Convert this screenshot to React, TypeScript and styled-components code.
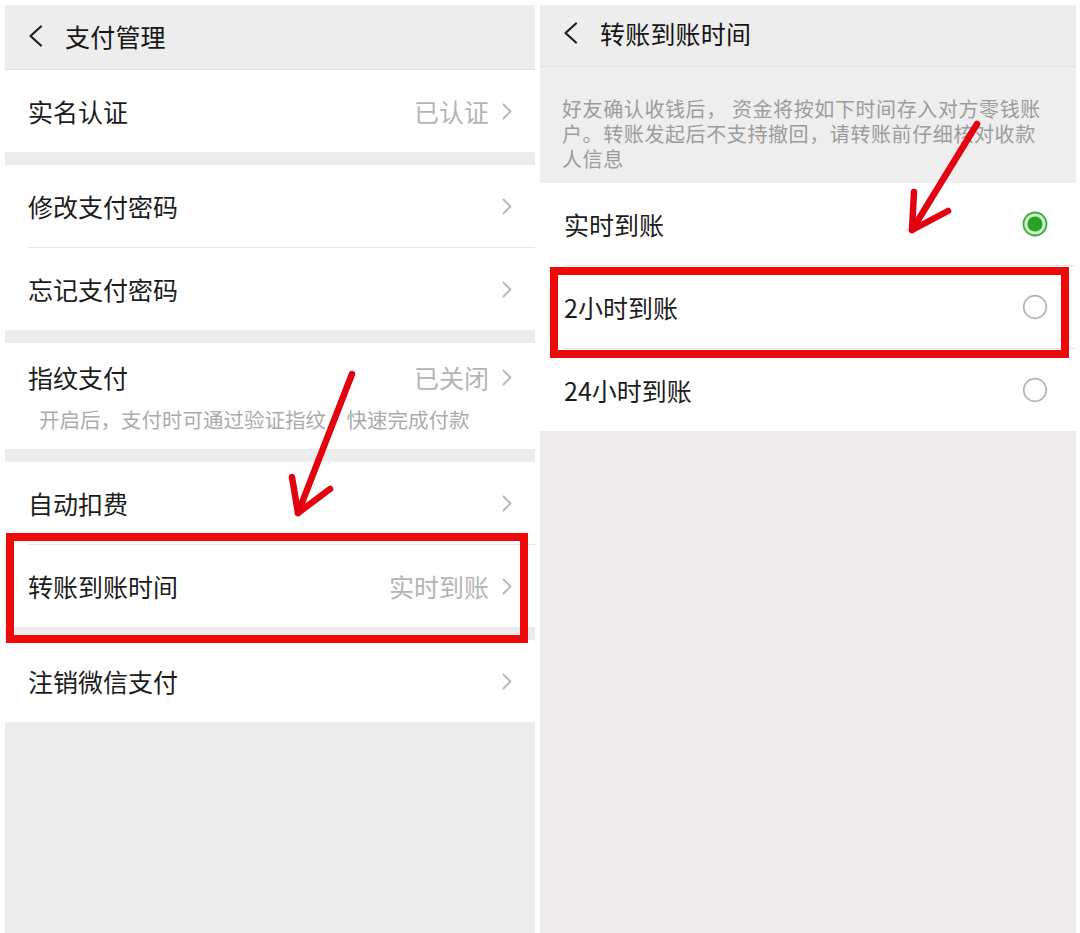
import React from "react";
import styled, { createGlobalStyle } from "styled-components";

const Global = createGlobalStyle`
  html, body { margin: 0; padding: 0; background: #ffffff; }
  body { font-family: "Noto Sans CJK SC", "Noto Sans", sans-serif; overflow: hidden; }
  * { box-sizing: border-box; }
`;

const Stage = styled.div`
  display: flex;
  gap: 5px;
  padding: 5px 4px 0 5px;
  height: 933px;
  overflow: hidden;
  background: #ffffff;
`;

const Panel = styled.div<{ $w: number; $bg: string }>`
  position: relative;
  width: ${(p) => p.$w}px;
  flex: 0 0 ${(p) => p.$w}px;
  height: 100%;
  background: ${(p) => p.$bg};
  display: flex;
  flex-direction: column;
  overflow: hidden;
`;

const Header = styled.div<{ $h: number; $pb?: number }>`
  height: ${(p) => p.$h}px;
  flex: 0 0 ${(p) => p.$h}px;
  background: #ededed;
  border-bottom: 1px solid #e0e0e0;
  display: flex;
  align-items: center;
  gap: 22px;
  padding: 0 0 ${(p) => p.$pb ?? 0}px 23px;
`;

const HeaderTitle = styled.div`
  font-size: 25px;
  color: #151515;
  line-height: 1;
  letter-spacing: 0.2px;
`;

const Group = styled.div<{ $mt?: number }>`
  background: #ffffff;
  margin-top: ${(p) => p.$mt ?? 0}px;
  display: flex;
  flex-direction: column;
`;

const Divider = styled.div<{ $inset: number }>`
  height: 1px;
  margin-left: ${(p) => p.$inset}px;
  background: #e6e6e6;
`;

const Row = styled.div<{ $h?: number }>`
  height: ${(p) => p.$h ?? 82}px;
  display: flex;
  align-items: center;
  padding: 0 23px 0 23px;
`;

const Label = styled.div`
  flex: 1;
  font-size: 25px;
  color: #1c1c1c;
  line-height: 1.4;
`;

const Value = styled.div`
  font-size: 25px;
  color: #b4b4b4;
  line-height: 1.4;
  margin-right: 13px;
`;

const TwoLine = styled.div`
  display: flex;
  flex-direction: column;
  padding: 17px 23px 16px 23px;
`;

const TitleLine = styled.div`
  display: flex;
  align-items: center;
  height: 35px;
`;

const SubText = styled.div`
  margin-top: 10px;
  padding-left: 11px;
  font-size: 20.5px;
  line-height: 28px;
  color: #ababab;
`;

const Description = styled.div`
  height: 116px;
  flex: 0 0 116px;
  background: #eeeeee;
  padding: 29px 16px 0 22px;
  font-size: 20px;
  letter-spacing: 0.6px;
  line-height: 25px;
  color: #9c9c9c;
`;

const RadioRow = styled.div`
  height: 82px;
  display: flex;
  align-items: center;
  padding: 0 28px 0 24px;
`;

const Highlight = styled.div<{ $l: number; $t: number; $w: number; $h: number }>`
  position: absolute;
  left: ${(p) => p.$l}px;
  top: ${(p) => p.$t}px;
  width: ${(p) => p.$w}px;
  height: ${(p) => p.$h}px;
  border: 8.5px solid #ee0a0a;
  pointer-events: none;
`;

const ArrowLayer = styled.svg`
  position: absolute;
  left: 0;
  top: 0;
  pointer-events: none;
  overflow: visible;
`;

const Chevron = () => (
  <svg width="10" height="17" viewBox="0 0 10 17">
    <polyline points="1.5,1.5 8.5,8.5 1.5,15.5" fill="none" stroke="#b6b6b6" strokeWidth="1.8" strokeLinecap="round" strokeLinejoin="round" />
  </svg>
);

const Back = () => (
  <svg width="15" height="22" viewBox="0 0 15 22">
    <polyline points="13,1.5 2.5,11 13,20.5" fill="none" stroke="#1e1e1e" strokeWidth="2.2" strokeLinecap="round" strokeLinejoin="round" />
  </svg>
);

const Radio = ({ on }: { on?: boolean }) =>
  on ? (
    <svg width="26" height="26" viewBox="0 0 26 26">
      <circle cx="13" cy="13" r="11.5" fill="#d4f0cf" stroke="#3dae36" strokeWidth="1.8" />
      <circle cx="13" cy="13" r="7.6" fill="#24a324" />
    </svg>
  ) : (
    <svg width="26" height="26" viewBox="0 0 26 26">
      <circle cx="13" cy="13" r="11.3" fill="none" stroke="#b4b4b4" strokeWidth="1.7" />
    </svg>
  );

type ArrowProps = { x1: number; y1: number; x2: number; y2: number; b1: [number, number]; b2: [number, number] };

const Arrow = ({ x1, y1, x2, y2, b1, b2 }: ArrowProps) => (
  <ArrowLayer width="10" height="10">
    <line x1={x1} y1={y1} x2={x2} y2={y2} stroke="#e3000f" strokeWidth="6.5" strokeLinecap="round" />
    <polyline
      points={`${b1[0]},${b1[1]} ${x2},${y2} ${b2[0]},${b2[1]}`}
      fill="none"
      stroke="#e3000f"
      strokeWidth="6.5"
      strokeLinecap="round"
      strokeLinejoin="round"
    />
  </ArrowLayer>
);

type Item = { label: string; value?: string };

const NavRow = ({ label, value }: Item) => (
  <Row>
    <Label>{label}</Label>
    {value && <Value>{value}</Value>}
    <Chevron />
  </Row>
);

export default function App() {
  return (
    <>
      <Global />
      <Stage>
        <Panel $w={530} $bg="#ececec">
          <Header $h={65} $pb={2}>
            <Back />
            <HeaderTitle>支付管理</HeaderTitle>
          </Header>
          <Group>
            <NavRow label="实名认证" value="已认证" />
          </Group>
          <Group $mt={13}>
            <NavRow label="修改支付密码" />
            <Divider $inset={23} />
            <NavRow label="忘记支付密码" />
          </Group>
          <Group $mt={13}>
            <TwoLine>
              <TitleLine>
                <Label>指纹支付</Label>
                <Value>已关闭</Value>
                <Chevron />
              </TitleLine>
              <SubText>开启后，支付时可通过验证指纹，快速完成付款</SubText>
            </TwoLine>
          </Group>
          <Group $mt={13}>
            <NavRow label="自动扣费" />
            <Divider $inset={23} />
            <NavRow label="转账到账时间" value="实时到账" />
          </Group>
          <Group $mt={13}>
            <NavRow label="注销微信支付" />
          </Group>
          <Highlight $l={1} $t={528} $w={522} $h={110} />
          <Arrow x1={347} y1={369} x2={293} y2={508} b1={[287, 472]} b2={[325, 484]} />
        </Panel>
        <Panel $w={536} $bg="#f0ebec">
          <Header $h={62} $pb={5}>
            <Back />
            <HeaderTitle>转账到账时间</HeaderTitle>
          </Header>
          <Description>
            好友确认收钱后， 资金将按如下时间存入对方零钱账
            <br />
            户。转账发起后不支持撤回，请转账前仔细核对收款
            <br />
            人信息
          </Description>
          <Group>
            <RadioRow>
              <Label>实时到账</Label>
              <Radio on />
            </RadioRow>
            <Divider $inset={24} />
            <RadioRow>
              <Label>2小时到账</Label>
              <Radio />
            </RadioRow>
            <Divider $inset={24} />
            <RadioRow>
              <Label>24小时到账</Label>
              <Radio />
            </RadioRow>
          </Group>
          <Highlight $l={10} $t={262} $w={519} $h={91} />
          <Arrow x1={437} y1={119} x2={372} y2={225} b1={[374, 187]} b2={[408, 206]} />
        </Panel>
      </Stage>
    </>
  );
}
